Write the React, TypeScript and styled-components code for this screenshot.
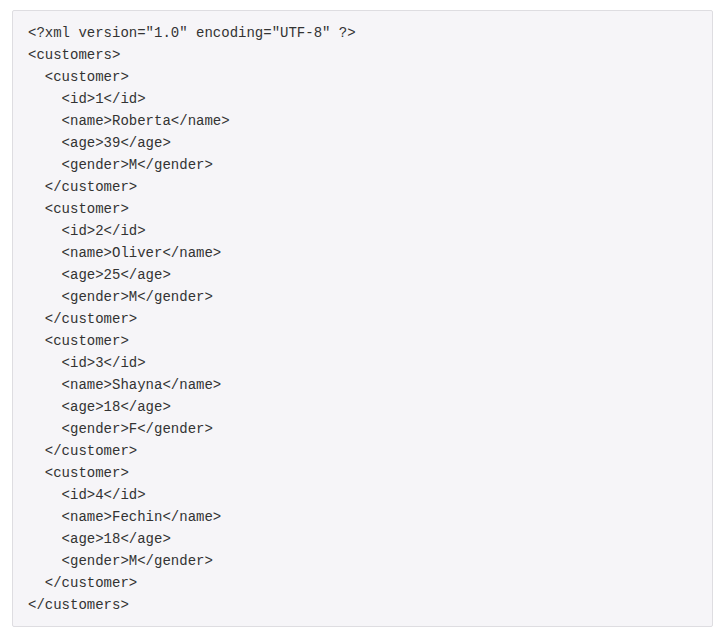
import React from "react";
import styled, { createGlobalStyle } from "styled-components";

const Global = createGlobalStyle`
  html, body { margin: 0; padding: 0; background: #ffffff; }
  body { padding: 10px 10px 10px 12px; }
`;

const CodeBlock = styled.pre`
  margin: 0;
  box-sizing: border-box;
  background: #f6f5f8;
  border: 1px solid #dedde1;
  border-radius: 2px;
  padding: 11px 15px 10px 15px;
  font-family: "Liberation Mono", "Courier New", monospace;
  font-size: 14px;
  line-height: 22px;
  color: #333333;
  white-space: pre;
`;

const xml = `<?xml version="1.0" encoding="UTF-8" ?>
<customers>
  <customer>
    <id>1</id>
    <name>Roberta</name>
    <age>39</age>
    <gender>M</gender>
  </customer>
  <customer>
    <id>2</id>
    <name>Oliver</name>
    <age>25</age>
    <gender>M</gender>
  </customer>
  <customer>
    <id>3</id>
    <name>Shayna</name>
    <age>18</age>
    <gender>F</gender>
  </customer>
  <customer>
    <id>4</id>
    <name>Fechin</name>
    <age>18</age>
    <gender>M</gender>
  </customer>
</customers>`;

export default function App() {
  return (
    <>
      <Global />
      <CodeBlock>{xml}</CodeBlock>
    </>
  );
}
